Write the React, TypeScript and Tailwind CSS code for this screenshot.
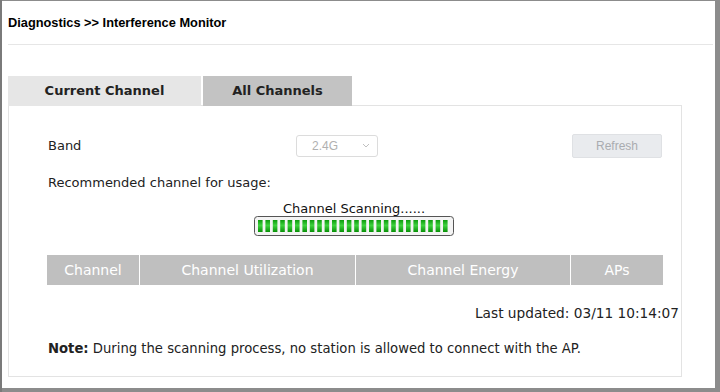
import React from "react";

const tahoma = "font-['DejaVu_Sans',Verdana,sans-serif]";
const arial = "font-['Liberation_Sans',Arial,sans-serif]";

function ScanBar() {
  const segs = Array.from({ length: 26 }, (_, i) => i);
  return (
    <svg width="200" height="20" viewBox="0 0 200 20" className="block">
      <defs>
        <linearGradient id="g" x1="0" y1="0" x2="0" y2="1">
          <stop offset="0" stopColor="#0c9a0c" />
          <stop offset="0.45" stopColor="#3fd23f" />
          <stop offset="1" stopColor="#079107" />
        </linearGradient>
      </defs>
      <rect x="0.5" y="0.5" width="199" height="19" rx="3" fill="#f4f4f4" stroke="#555" />
      {segs.map((i) => (
        <rect key={i} x={4 + i * 7.4} y="4" width="4.6" height="12" fill="url(#g)" />
      ))}
    </svg>
  );
}

export default function App() {
  return (
    <div className="w-[720px] h-[392px] bg-[#8c8c8c] relative overflow-hidden">
      <div className="absolute inset-0 pt-[1px] pl-[2px] pr-[5px] pb-[4px] bg-[linear-gradient(90deg,#7a7a7a_0,#7a7a7a_2px,transparent_2px)]">
        <div className="w-full h-full bg-white flex flex-col px-[6px]">
          <div className={`${arial} text-[12.8px] font-bold text-black h-[43px] flex items-center pt-[1px]`}>
            Diagnostics &gt;&gt; Interference Monitor
          </div>
          <div className="h-px bg-[#e6e6e6] mr-[-4px]" />

          <div className="mt-[31px] w-[674px] flex flex-col">
            <div className={`flex h-[30px] ${tahoma} text-[13px] font-bold text-[#222]`}>
              <div className="w-[193px] bg-[#e6e6e6] flex items-center justify-center">Current Channel</div>
              <div className="w-[2px] border-b border-[#e3e3e3]" />
              <div className="w-[149px] bg-[#c3c3c3] flex items-center justify-center">All Channels</div>
              <div className="flex-1 border-b border-[#e3e3e3]" />
            </div>
            <div className={`h-[271px] border border-[#e3e3e3] border-t-0 ${tahoma} text-[13px] text-[#222] pl-[39px] pr-[18px] flex flex-col`}>
              <div className="flex items-center mt-[28px] h-[23px]">
                <span className="w-[248px]">Band</span>
                <div className={`${arial} w-[82px] h-[22px] border border-[#dcdcdc] rounded-[3px] flex items-center justify-between pl-[15px] pr-[7px] text-[12px] text-[#b0b0b0]`}>
                  <span>2.4G</span>
                  <svg width="8" height="5" viewBox="0 0 8 5"><path d="M1 1 L4 4 L7 1" fill="none" stroke="#c0c0c0" strokeWidth="1" /></svg>
                </div>
                <div className="flex-1" />
                <div className={`${arial} w-[90px] h-[24px] bg-[#e9ebee] border border-[#dfe1e4] rounded-[2px] flex items-center justify-center text-[12px] text-[#a9acb0] mr-[1px]`}>
                  Refresh
                </div>
              </div>
              <div className="mt-[18px] leading-[16px]">Recommended channel for usage:</div>
              <div className="flex flex-col items-center mr-[3px] mt-[10px]">
                <div className="leading-[16px] text-[#111]">Channel Scanning......</div>
                <div className="mt-[-1px]"><ScanBar /></div>
              </div>
              <div className="mt-[19px] flex h-[30px] bg-[#bfbfbf] text-white text-[14px] w-[616px] ml-[-1px]">
                <div className="w-[93px] flex items-center justify-center border-r border-white">Channel</div>
                <div className="w-[216px] flex items-center justify-center border-r border-white">Channel Utilization</div>
                <div className="w-[215px] flex items-center justify-center border-r border-white">Channel Energy</div>
                <div className="flex-1 flex items-center justify-center">APs</div>
              </div>
              <div className="mt-[20px] text-right leading-[16px] mr-[-16px] text-[13.7px]">Last updated: 03/11 10:14:07</div>
              <div className="mt-[20px] leading-[16px] text-[13.2px]">
                <span className="font-bold">Note:</span> During the scanning process, no station is allowed to connect with the AP.
              </div>
            </div>
          </div>
        </div>
      </div>
    </div>
  );
}
